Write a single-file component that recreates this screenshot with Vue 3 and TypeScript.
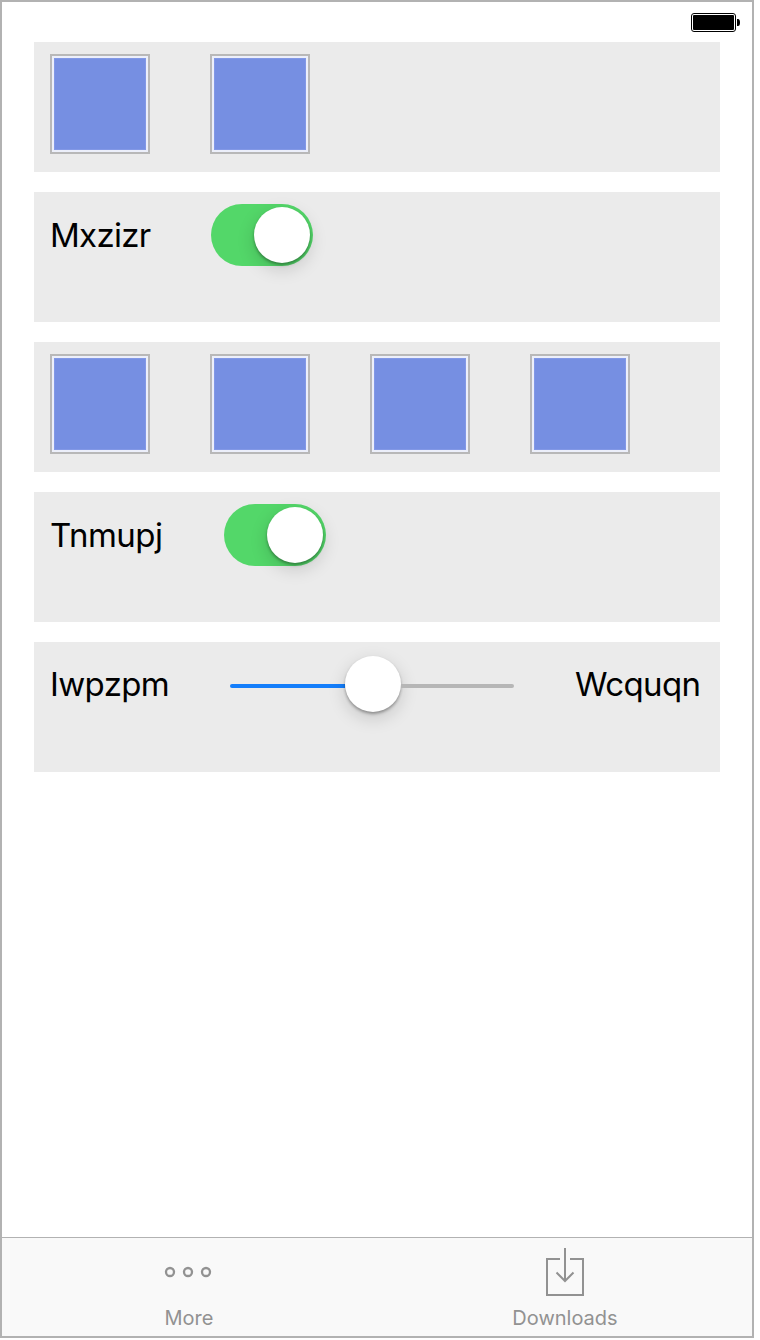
<script setup lang="ts">
type Row =
  | { kind: 'boxes'; count: number }
  | { kind: 'switch'; label: string; name: string }
  | { kind: 'slider'; label: string; end: string }

const rows: Row[] = [
  { kind: 'boxes', count: 2 },
  { kind: 'switch', label: 'Mxzizr', name: 'first' },
  { kind: 'boxes', count: 4 },
  { kind: 'switch', label: 'Tnmupj', name: 'second' },
  { kind: 'slider', label: 'Iwpzpm', end: 'Wcquqn' },
]
</script>

<template>
  <div class="phone">
    <header class="status">
      <svg width="50" height="20" viewBox="0 0 50 20">
        <rect x="0.5" y="0.5" width="44" height="18" rx="2.5" fill="#fff" stroke="#000" />
        <rect x="2" y="2" width="41" height="15" rx="1" fill="#000" />
        <path d="M46 6h1q2 0 2 3.5t-2 3.5h-1z" fill="#000" />
      </svg>
    </header>
    <main class="rows">
      <section v-for="(row, i) in rows" :key="i" class="row">
        <template v-if="row.kind === 'boxes'">
          <span v-for="n in row.count" :key="n" class="box"></span>
        </template>
        <template v-else-if="row.kind === 'switch'">
          <span class="label" :class="row.name">{{ row.label }}</span>
          <span class="switch"><span class="knob"></span></span>
        </template>
        <template v-else>
          <span class="label start">{{ row.label }}</span>
          <span class="slider">
            <span class="track filled"></span>
            <span class="knob thumb"></span>
            <span class="track"></span>
          </span>
          <span class="label end">{{ row.end }}</span>
        </template>
      </section>
    </main>
    <nav class="tabs">
      <div class="tab">
        <svg width="50" height="54" viewBox="0 0 50 54" fill="none" stroke="#929292" stroke-width="2.3">
          <circle cx="6" cy="26" r="4" />
          <circle cx="24" cy="26" r="4" />
          <circle cx="42" cy="26" r="4" />
        </svg>
        <span class="caption">More</span>
      </div>
      <div class="tab">
        <svg width="50" height="54" viewBox="0 0 50 54" fill="none" stroke="#929292" stroke-width="2">
          <path d="M20 13H7V49H43V13H30M25 2V35M16.5 26.5L25 35L33.5 26.5" />
        </svg>
        <span class="caption">Downloads</span>
      </div>
    </nav>
  </div>
</template>

<style>
body {
  background: #fff;
}
</style>

<style scoped>
.phone {
  box-sizing: border-box;
  width: 754px;
  height: 1338px;
  border: 2px solid #b2b2b2;
  background: #fff;
  display: flex;
  flex-direction: column;
  font-family: Inter, "Liberation Sans", sans-serif;
}
.status {
  height: 40px;
  display: flex;
  justify-content: flex-end;
  box-sizing: border-box;
  padding: 11px 11px 0 0;
}
.rows {
  flex: 1;
  display: flex;
  flex-direction: column;
  gap: 20px;
  padding: 0 32px;
}
.row {
  box-sizing: border-box;
  height: 130px;
  background: #ebebeb;
  padding: 12px 16px;
  display: flex;
  gap: 60px;
  align-items: flex-start;
}
.box {
  box-sizing: border-box;
  width: 100px;
  height: 100px;
  border: 2px solid #b8b8b8;
  background: #768fe2;
  box-shadow: inset 0 0 0 2px #eceffa, inset 0 0 0 3px #8298e6;
}
.label {
  font-size: 33px;
  font-weight: 370;
  line-height: 62px;
  white-space: nowrap;
  color: #000;
}
.first {
  width: 101px;
  letter-spacing: -0.7px;
}
.second {
  width: 114px;
  letter-spacing: -0.5px;
}
.start {
  width: 120px;
  line-height: 60px;
  letter-spacing: -0.65px;
}
.end {
  box-sizing: border-box;
  width: 126px;
  padding-left: 1px;
  line-height: 60px;
  letter-spacing: -0.6px;
}
.switch {
  box-sizing: border-box;
  width: 102px;
  height: 62px;
  border-radius: 31px;
  background: #53d769;
  padding: 3px;
  display: flex;
  justify-content: flex-end;
}
.knob {
  width: 56px;
  height: 56px;
  flex: none;
  border-radius: 50%;
  background: #fff;
  box-shadow: 0 6px 18px rgba(0, 0, 0, 0.16), 0 2px 3px rgba(0, 0, 0, 0.32);
}
.slider {
  width: 284px;
  height: 60px;
  display: flex;
  align-items: center;
}
.track {
  flex: 1;
  height: 4px;
  margin-top: 4px;
  background: #b6b6b6;
  border-radius: 0 2px 2px 0;
}
.filled {
  flex: 0 0 115px;
  background: #147efb;
  border-radius: 2px 0 0 2px;
}
.tabs {
  box-sizing: border-box;
  height: 99px;
  border-top: 1px solid #b2b2b2;
  background: #f9f9f9;
  display: flex;
  justify-content: space-between;
  padding: 8px 0 0;
}
.tab {
  width: 374px;
  display: flex;
  flex-direction: column;
  align-items: center;
}
.caption {
  font-size: 20px;
  font-weight: 370;
  line-height: 24px;
  margin-top: 6px;
  color: #929292;
}
</style>
